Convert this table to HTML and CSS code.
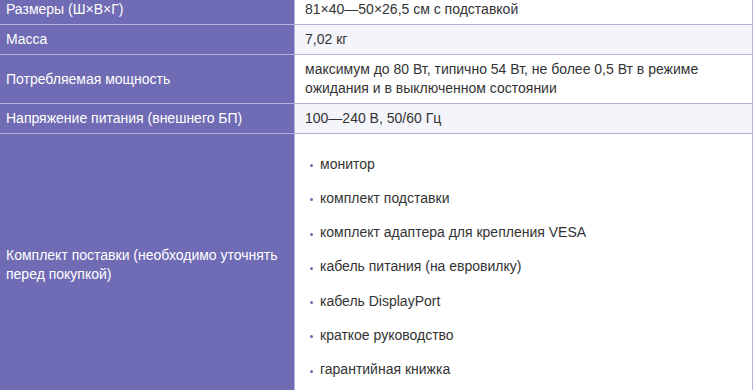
FILE: index.html
```html
<!DOCTYPE html>
<html lang="ru">
<head>
<meta charset="utf-8">
<link rel="stylesheet" href="styles.css">
</head>
<body>
<table class="specs">
  <colgroup><col class="col-label"><col class="col-value"></colgroup>
  <tbody>
    <tr><td class="label">Размеры (Ш×В×Г)</td><td class="value">81×40—50×26,5 см с подставкой</td></tr>
    <tr class="alt"><td class="label">Масса</td><td class="value">7,02 кг</td></tr>
    <tr><td class="label">Потребляемая мощность</td><td class="value">максимум до 80 Вт, типично 54 Вт, не более 0,5 Вт в режиме<br>ожидания и в выключенном состоянии</td></tr>
    <tr class="alt"><td class="label">Напряжение питания (внешнего БП)</td><td class="value">100—240 В, 50/60 Гц</td></tr>
    <tr>
      <td class="label label-tall">Комплект поставки (необходимо уточнять перед покупкой)</td>
      <td class="value">
        <ul class="items">
          <li>монитор</li>
          <li>комплект подставки</li>
          <li>комплект адаптера для крепления VESA</li>
          <li>кабель питания (на евровилку)</li>
          <li>кабель DisplayPort</li>
          <li>краткое руководство</li>
          <li>гарантийная книжка</li>
        </ul>
      </td>
    </tr>
  </tbody>
</table>
</body>
</html>
```

FILE: styles.css
```css
html, body {
  margin: 0;
  padding: 0;
  background: #ffffff;
  overflow: hidden;
}
body {
  font-family: "Liberation Sans", Arial, sans-serif;
  font-size: 14px;
  line-height: 19px;
  color: #333333;
}
.specs {
  border-collapse: collapse;
  table-layout: fixed;
  width: 758px;
  margin: -6px 0 0 -5px;
}
.col-label { width: 299px; }
.specs td {
  border: 1px solid #b4b2da;
  padding: 5px 10px;
  vertical-align: middle;
}
.label {
  background: #6f6bb4;
  color: #ffffff;
}
.label-tall {
  padding-bottom: 12px;
}
.value {
  background: #ffffff;
}
.alt .value {
  background: #f4f4fb;
}
.items {
  list-style: none;
  margin: 8px 0 4px;
  padding: 0 0 0 5px;
}
.items li {
  position: relative;
  padding: 7.65px 0 7.65px 10px;
}
.items li::before {
  content: "";
  position: absolute;
  left: 0;
  top: 17px;
  width: 3px;
  height: 3px;
  border-radius: 50%;
  background: #6f6bb4;
}
```
